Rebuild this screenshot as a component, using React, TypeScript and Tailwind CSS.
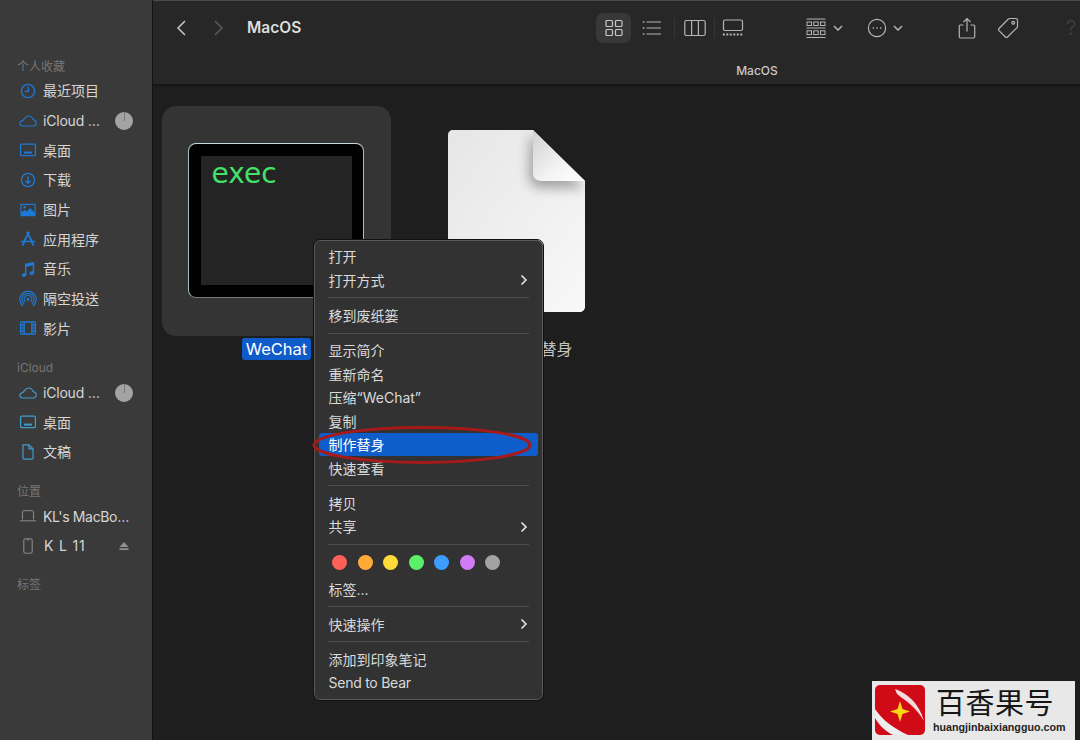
import React from 'react';

const sansStack = "font-['Inter','Noto_Sans_CJK_SC',sans-serif]";

type IconProps = { className?: string };

const ClockIcon = ({ className }: IconProps) => (
  <svg viewBox="0 0 18 18" className={className} fill="none" stroke="currentColor" strokeWidth="1.3">
    <circle cx="9" cy="9" r="6.6" />
    <path d="M9.4 4.8V9.4H5.6" />
  </svg>
);
const CloudIcon = ({ className }: IconProps) => (
  <svg viewBox="0 0 18 18" className={className} fill="none" stroke="currentColor" strokeWidth="1.2">
    <path d="M4.4 14h9.4c1.9 0 3.4-1.4 3.4-3.2 0-1.7-1.3-3-3-3.2C13.300 5.400 11.600 4 9.700 4 7.900 4 6.400 5.100 5.800 6.800 5.400 6.700 5 6.800 4.700 7.100 4.300 7.500 4.200 8 4.200 8.500 2.300 8.700 .9 9.800 .9 11.300 .9 12.800 2.400 14 4.400 14Z" />
  </svg>
);
const DesktopIcon = ({ className }: IconProps) => (
  <svg viewBox="0 0 18 18" className={className} fill="none" stroke="currentColor" strokeWidth="1.3">
    <rect x="1.600" y="3.200" width="14.800" height="11.400" rx="1.200" />
    <path d="M5 11.600H13" strokeWidth="2" />
  </svg>
);
const DownloadIcon = ({ className }: IconProps) => (
  <svg viewBox="0 0 18 18" className={className} fill="none" stroke="currentColor" strokeWidth="1.3">
    <circle cx="9" cy="9" r="6.600" />
    <path d="M9 5.200V12M6.400 9.700 9 12.300 11.600 9.700" />
  </svg>
);
const PictureIcon = ({ className }: IconProps) => (
  <svg viewBox="0 0 18 18" className={className}>
    <path fill="currentColor" fillRule="evenodd" d="M2.400 2.800h13.200c.6 0 1 .4 1 1v10.400c0 .6-.4 1-1 1H2.400c-.6 0-1-.4-1-1V3.800c0-.6.4-1 1-1ZM2.600 4v7.200l3-2.500 2.300 1.800 3.200-3.600 4.300 4.300V4H2.600Z" />
    <circle cx="5.600" cy="6.200" r="1.300" fill="currentColor" />
  </svg>
);
const AppsIcon = ({ className }: IconProps) => (
  <svg viewBox="0 0 18 18" className={className} fill="none" stroke="currentColor" strokeWidth="1.700" strokeLinecap="round">
    <path d="M9.800 2.500 5 11.500M8.200 2.500 13 11.500M2.500 11.500H15.500M3.600 15 5 12.500M14.400 15 13 12.500" />
  </svg>
);
const MusicIcon = ({ className }: IconProps) => (
  <svg viewBox="0 0 18 18" className={className}>
    <path fill="currentColor" d="M6 3.800 15.200 1.800V12.800C15.200 14.200 14 15 12.700 15 11.500 15 10.700 14.300 10.700 13.300 10.700 12.200 11.600 11.500 12.700 11.300L13.800 11.100V5.400L7.400 6.800V14.800C7.400 16.100 6.200 17 4.900 17 3.700 17 2.900 16.300 2.900 15.300 2.900 14.200 3.800 13.500 4.900 13.300L6 13.100Z" />
  </svg>
);
const AirDropIcon = ({ className }: IconProps) => (
  <svg viewBox="0 0 18 18" className={className} fill="none" stroke="currentColor" strokeWidth="1.200">
    <path d="M4.200 16A8.200 8.200 0 1 1 13.800 16" />
    <path d="M5.200 13.900A6 6 0 1 1 12.800 13.900" />
    <path d="M6.300 11.800A3.800 3.800 0 1 1 11.700 11.800" />
    <circle cx="9" cy="9.200" r="1.500" fill="currentColor" stroke="none" />
  </svg>
);
const FilmIcon = ({ className }: IconProps) => (
  <svg viewBox="0 0 18 18" className={className} fill="none" stroke="currentColor" strokeWidth="1.300">
    <rect x="1.600" y="3" width="14.800" height="12" rx="1" />
    <path d="M5.200 3V15M12.800 3V15M1.600 6H5.200M1.600 9H5.200M1.600 12H5.200M12.800 6H16.400M12.800 9H16.400M12.800 12H16.400" />
  </svg>
);
const DocIcon = ({ className }: IconProps) => (
  <svg viewBox="0 0 18 18" className={className} fill="none" stroke="currentColor" strokeWidth="1.200">
    <path d="M4 1.800H10L14 5.800V15C14 15.700 13.500 16.200 12.800 16.200H5.200C4.500 16.200 4 15.700 4 15V1.800Z" />
    <path d="M10 1.800V5.800H14" />
  </svg>
);
const LaptopIcon = ({ className }: IconProps) => (
  <svg viewBox="0 0 18 18" className={className} fill="none" stroke="currentColor" strokeWidth="1">
    <path d="M3.500 12.500V4.500C3.500 4 3.900 3.700 4.300 3.700H13.700C14.100 3.700 14.500 4 14.500 4.500V12.500" />
    <path d="M.8 13.800H17.200" />
  </svg>
);
const PhoneIcon = ({ className }: IconProps) => (
  <svg viewBox="0 0 18 18" className={className} fill="none" stroke="currentColor" strokeWidth="1.100">
    <rect x="4.800" y="1.800" width="8.400" height="14.400" rx="1.600" />
    <path d="M7.500 2.800H10.500" />
  </svg>
);

type SidebarRow = {
  label: string;
  icon: (props: IconProps) => React.ReactElement;
  pie?: boolean;
  eject?: boolean;
  textClass?: string;
};

const sidebarGroups: { title: string; color: string; marginTop: string; rows: SidebarRow[] }[] = [
  {
    title: '个人收藏',
    color: 'text-[#1c7ad6]',
    marginTop: 'mt-[55px]',
    rows: [
      { label: '最近项目', icon: ClockIcon },
      { label: 'iCloud …', icon: CloudIcon, pie: true, textClass: 'ml-[6px] tracking-[-0.2px]' },
      { label: '桌面', icon: DesktopIcon },
      { label: '下载', icon: DownloadIcon },
      { label: '图片', icon: PictureIcon },
      { label: '应用程序', icon: AppsIcon },
      { label: '音乐', icon: MusicIcon },
      { label: '隔空投送', icon: AirDropIcon },
      { label: '影片', icon: FilmIcon },
    ],
  },
  {
    title: 'iCloud',
    color: 'text-[#3f9ccb]',
    marginTop: 'mt-[13.500px]',
    rows: [
      { label: 'iCloud …', icon: CloudIcon, pie: true, textClass: 'ml-[6px] tracking-[-0.2px]' },
      { label: '桌面', icon: DesktopIcon },
      { label: '文稿', icon: DocIcon },
    ],
  },
  {
    title: '位置',
    color: 'text-[#8a8a8a]',
    marginTop: 'mt-[13.500px]',
    rows: [
      { label: "KL's MacBo…", icon: LaptopIcon, textClass: 'ml-[6px] tracking-[-0.35px]' },
      { label: 'K L 11', icon: PhoneIcon, eject: true, textClass: 'ml-[7px] tracking-[0.8px]' },
    ],
  },
  { title: '标签', color: '', marginTop: 'mt-[13px]', rows: [] },
];

const Sidebar = () => (
  <aside className="w-[152px] shrink-0 bg-[#3a3a3a] border-r border-[#121212] box-content">
    {sidebarGroups.map((group) => (
      <div key={group.title} className={group.marginTop}>
        <div className="h-[21px] pl-[17px] pt-[2px] flex items-center text-[12px] text-[#767676]">{group.title}</div>
        {group.rows.map((row, i) => {
          const Icon = row.icon;
          return (
            <div key={i} className="h-[29.7px] flex items-center pl-[19px] pr-[19px]">
              <Icon className={`w-[18px] h-[18px] shrink-0 ${group.color}`} />
              <span className={`text-[14px] text-[#d6d6d6] whitespace-nowrap ${row.textClass ?? 'ml-[6px]'}`}>{row.label}</span>
              {row.pie && (
                <span className="ml-auto w-[18px] h-[18px] rounded-full bg-[#a3a3a3] flex justify-center shrink-0">
                  <span className="w-px h-[9px] bg-[#777]" />
                </span>
              )}
              {row.eject && (
                <svg viewBox="0 0 10 10" className="ml-auto mr-[4px] w-[10px] h-[10px] text-[#8f8f8f]" fill="currentColor">
                  <path d="M5 1 9.500 6H.5Z" />
                  <rect x=".5" y="7.200" width="9" height="1.800" />
                </svg>
              )}
            </div>
          );
        })}
      </div>
    ))}
  </aside>
);

const Toolbar = () => (
  <header className="h-[86px] shrink-0 bg-[#272727] border-t border-[#4a4a4a] border-b-2 border-b-[#161616] flex flex-col">
    <div className="h-[53px] flex items-center shrink-0">
      <div className="flex-1 flex items-center pl-[21px]">
        <svg viewBox="0 0 14 20" className="w-[14px] h-[20px] text-[#c4c4c4]" fill="none" stroke="currentColor" strokeWidth="1.600">
          <path d="M11 3 4 10 11 17" />
        </svg>
        <svg viewBox="0 0 14 20" className="ml-[24px] w-[14px] h-[20px] text-[#585858]" fill="none" stroke="currentColor" strokeWidth="1.600">
          <path d="M3 3 10 10 3 17" />
        </svg>
        <span className="ml-[21px] text-[15.500px] font-semibold text-[#dedede]">MacOS</span>
      </div>
      <div className="w-[484px] shrink-0 flex items-center text-[#b4b4b4]">
        <div className="w-[35px] h-[30px] rounded-[7px] bg-[#383838] flex items-center justify-center">
          <svg viewBox="0 0 18 18" className="w-[18px] h-[18px]" fill="none" stroke="#c8c8c8" strokeWidth="1.200">
            <rect x="1" y="1.500" width="6.500" height="6" rx="1" />
            <rect x="10.500" y="1.500" width="6.500" height="6" rx="1" />
            <rect x="1" y="10.500" width="6.500" height="6" rx="1" />
            <rect x="10.500" y="10.500" width="6.500" height="6" rx="1" />
          </svg>
        </div>
        <div className="ml-[2px] w-[38px] flex justify-center">
          <svg viewBox="0 0 20 16" className="w-[20px] h-[16px]" fill="none" stroke="currentColor" strokeWidth="1.200">
            <path d="M4.500 2H19M4.500 8H19M4.500 14H19" />
            <path d="M.8 2H2.400M.8 8H2.400M.8 14H2.400" strokeWidth="1.600" />
          </svg>
        </div>
        <span className="ml-[3px] w-px h-[20px] bg-[#363636]" />
        <div className="ml-px w-[38px] flex justify-center">
          <svg viewBox="0 0 22 18" className="w-[22px] h-[18px]" fill="none" stroke="currentColor" strokeWidth="1.200">
            <rect x=".8" y="1.500" width="20.400" height="15" rx="1.500" />
            <path d="M7.600 1.500V16.500M14.400 1.500V16.500" />
          </svg>
        </div>
        <span className="w-px h-[20px] bg-[#363636]" />
        <div className="w-[36px] flex justify-center">
          <svg viewBox="0 0 22 18" className="w-[22px] h-[18px]" fill="none" stroke="currentColor" strokeWidth="1.200">
            <rect x="1.500" y="1" width="19" height="10.500" rx="1.500" />
            <path d="M.8 15.500H21.200" strokeWidth="2" strokeDasharray="2 1.500" />
          </svg>
        </div>
        <div className="ml-[53px] w-[24px] flex justify-center">
          <svg viewBox="0 0 20 20" className="w-[20px] h-[20px]" fill="none" stroke="currentColor" strokeWidth="1">
            <path d="M.5 1H19.500M.5 10H19.500M.5 19.500H19.500" />
            <rect x="1" y="4" width="4.500" height="3.500" />
            <rect x="7.700" y="4" width="4.500" height="3.500" />
            <rect x="14.500" y="4" width="4.500" height="3.500" />
            <rect x="1" y="12.800" width="4.500" height="3.800" />
            <rect x="7.700" y="12.800" width="4.500" height="3.800" />
            <rect x="14.500" y="12.800" width="4.500" height="3.800" />
          </svg>
        </div>
        <svg viewBox="0 0 10 6" className="ml-[5px] w-[10px] h-[6px]" fill="none" stroke="currentColor" strokeWidth="1.500">
          <path d="M1 1 5 5 9 1" />
        </svg>
        <div className="ml-[24px] w-[20px] flex justify-center">
          <svg viewBox="0 0 20 20" className="w-[20px] h-[20px]" fill="none" stroke="currentColor" strokeWidth="1.200">
            <circle cx="10" cy="10" r="8.600" />
            <path d="M5.700 10H7M9.400 10H10.700M13 10H14.300" strokeWidth="1.600" />
          </svg>
        </div>
        <svg viewBox="0 0 10 6" className="ml-[6px] w-[10px] h-[6px]" fill="none" stroke="currentColor" strokeWidth="1.500">
          <path d="M1 1 5 5 9 1" />
        </svg>
        <div className="ml-[54px] w-[20px] flex justify-center">
          <svg viewBox="0 0 18 22" className="w-[18px] h-[22px]" fill="none" stroke="currentColor" strokeWidth="1.200">
            <path d="M5.500 8H2.500C1.800 8 1.300 8.500 1.300 9.200V19.800C1.300 20.500 1.800 21 2.500 21H15.500C16.200 21 16.700 20.500 16.700 19.800V9.200C16.700 8.500 16.200 8 15.500 8H12.500" />
            <path d="M9 14.500V1.500M5.500 5 9 1.500 12.500 5" />
          </svg>
        </div>
        <div className="ml-[19px] w-[24px] flex justify-center">
          <svg viewBox="0 0 22 22" className="w-[22px] h-[22px]" fill="none" stroke="currentColor" strokeWidth="1.200">
            <path d="M12.500 1.500H19C20 1.500 20.500 2 20.500 3V9.500C20.500 10 20.300 10.400 20 10.700L10.500 20C9.900 20.600 9 20.600 8.400 20L2 13.600C1.400 13 1.400 12.100 2 11.500L11.300 2C11.600 1.700 12 1.500 12.500 1.500Z" />
            <circle cx="16.200" cy="5.800" r="1.400" />
          </svg>
        </div>
        <span className="ml-[46px] text-[20px] text-[#3c3c3c] leading-none">?</span>
      </div>
    </div>
    <div className="pl-[281px] text-center text-[12px] font-medium text-[#c8c8c8] leading-[33px]">MacOS</div>
  </header>
);

const ExecTile = () => (
  <div className="w-[229px] shrink-0 flex flex-col items-center">
    <div className="w-[229px] h-[230px] rounded-[14px] bg-[#343434] pl-[26px] pt-[37px]">
      <div className="w-[176px] h-[155px] rounded-[8px] bg-black border-[1.500px] border-t-[#c5dbe0] border-x-[#a8bdc2] border-b-[#777] pt-[11.500px] pl-[11.500px]">
        <div className="w-[151px] h-[129px] bg-[#242424] pl-[11px] pt-[1px] font-['DejaVu_Sans',sans-serif] text-[28px] leading-[34px] text-[#45e06a]">
          exec
        </div>
      </div>
    </div>
    <span className="mt-[2px] h-[22px] px-[4px] rounded-[3px] bg-[#0f5bc9] text-[16.500px] leading-[22px] text-white">WeChat</span>
  </div>
);

const AliasTile = () => (
  <div className="ml-[11px] w-[229px] shrink-0 flex flex-col items-center">
    <div className="w-[229px] h-[230px] flex justify-center pt-[24px]">
      <svg viewBox="0 0 137 182" className="w-[137px] h-[182px]">
        <defs>
          <linearGradient id="page" x1="0" y1="0" x2="1" y2="1">
            <stop offset="0" stopColor="#e6e6e6" />
            <stop offset="1" stopColor="#f8f8f8" />
          </linearGradient>
          <linearGradient id="fold" x1="0" y1="0" x2="1" y2="1">
            <stop offset="0" stopColor="#d0d0d0" />
            <stop offset=".6" stopColor="#f4f4f4" />
            <stop offset="1" stopColor="#ffffff" />
          </linearGradient>
          <filter id="foldShadow" x="-40%" y="-40%" width="180%" height="180%">
            <feGaussianBlur stdDeviation="6" />
          </filter>
          <clipPath id="pageClip">
            <path d="M5 0H85L137 51V177C137 180 134 182 132 182H5C2 182 0 180 0 177V5C0 2 2 0 5 0Z" />
          </clipPath>
        </defs>
        <path fill="url(#page)" d="M5 0H85L137 51V177C137 180 134 182 132 182H5C2 182 0 180 0 177V5C0 2 2 0 5 0Z" />
        <g clipPath="url(#pageClip)">
          <path fill="#6e6e6e" opacity=".6" filter="url(#foldShadow)" d="M82 4 137 58H95C86 58 81 54 81 46Z" />
        </g>
        <path fill="url(#fold)" d="M85 0 137 51H94C88 51 85 48 85 43Z" />
      </svg>
    </div>
    <span className="mt-[2px] h-[22px] text-[16px] leading-[22px] text-[#c4c4c4] whitespace-nowrap">WeChat 的替身</span>
  </div>
);

const Separator = () => (
  <div className="h-[11.700px] flex items-center px-[13px]">
    <div className="h-px w-full bg-[#4e4e4e]" />
  </div>
);

const MenuItem = ({ label, arrow, active, tight }: { label: string; arrow?: boolean; active?: boolean; tight?: boolean }) => (
  <div
    className={`h-[23.500px] mx-[4px] pl-[9.500px] pr-[10px] flex items-center justify-between rounded-[3px] text-[14px] whitespace-nowrap ${
      active ? 'bg-[#0f5ccb] text-white' : 'text-[#dadada]'
    } ${tight ? 'tracking-[-0.25px]' : ''}`}
  >
    <span>{label}</span>
    {arrow && (
      <svg viewBox="0 0 8 12" className="w-[8px] h-[12px] text-[#e6e6e6]" fill="none" stroke="currentColor" strokeWidth="1.600">
        <path d="M1.500 1.500 6 6 1.500 10.500" />
      </svg>
    )}
  </div>
);

const tagColors = [
  { name: 'red', cls: 'bg-[#ff6159]' },
  { name: 'orange', cls: 'bg-[#ffab3a]' },
  { name: 'yellow', cls: 'bg-[#ffdb3a]' },
  { name: 'green', cls: 'bg-[#5cf06a]' },
  { name: 'blue', cls: 'bg-[#3c9dff]' },
  { name: 'purple', cls: 'bg-[#cf7cf5]' },
  { name: 'gray', cls: 'bg-[#a3a3a6]' },
];

const ContextMenu = () => (
  <div className="absolute left-[314px] top-[240px] w-[229px] h-[460px] rounded-[6px] bg-[#323232] border border-[#5a5a5a] outline outline-[#111] pt-[4px]">
    <MenuItem label="打开" />
    <MenuItem label="打开方式" arrow />
    <Separator />
    <MenuItem label="移到废纸篓" />
    <Separator />
    <MenuItem label="显示简介" />
    <MenuItem label="重新命名" />
    <MenuItem label="压缩“WeChat”" />
    <MenuItem label="复制" />
    <MenuItem label="制作替身" active />
    <MenuItem label="快速查看" />
    <Separator />
    <MenuItem label="拷贝" />
    <MenuItem label="共享" arrow />
    <Separator />
    <div className="h-[27px] pl-[17px] pb-[3px] flex items-center gap-[10.500px]">
      {tagColors.map((c) => (
        <span key={c.name} className={`w-[15px] h-[15px] rounded-full ${c.cls}`} />
      ))}
    </div>
    <MenuItem label="标签..." />
    <Separator />
    <MenuItem label="快速操作" arrow />
    <Separator />
    <MenuItem label="添加到印象笔记" />
    <MenuItem label="Send to Bear" tight />
  </div>
);

const Watermark = () => (
  <div className="absolute left-[872px] top-[681px] w-[203px] h-[59px] bg-[#e8e8e8] flex pl-[3px] pt-[4px]">
    <svg viewBox="0 0 50 50" className="w-[50px] h-[50px] shrink-0">
      <rect width="50" height="50" rx="5" fill="#d10a17" />
      <path d="M0 24C8 36 20 44 33 50H18C10 46 4 40 0 33Z" fill="#eeeeee" />
      <path d="M20 4C32 8 44 18 49 36 42 24 34 18 26 12L32 17 22 9Z" fill="#f3dcdc" />
      <path d="M25 16 27.500 24 35 26.500 27.500 29 25 37 22.500 29 15 26.500 22.500 24Z" fill="#f7d614" />
    </svg>
    <div className="ml-[8px] flex flex-col items-start">
      <span className="ml-[3px] h-[32px] text-[29px] leading-[32px] tracking-[0.5px] text-[#161616] font-['Noto_Sans_CJK_SC',sans-serif] whitespace-nowrap">
        百香果号
      </span>
      <span className="mt-[3px] text-[10.700px] leading-[14px] font-bold text-[#222] font-['Liberation_Sans',sans-serif] whitespace-nowrap">
        huangjinbaixiangguo.com
      </span>
    </div>
  </div>
);

export default function App() {
  return (
    <div className={`relative w-[1080px] h-[740px] overflow-hidden flex bg-[#1e1e1e] ${sansStack}`}>
      <Sidebar />
      <div className="flex-1 min-w-0 flex flex-col">
        <Toolbar />
        <main className="flex-1 flex items-start pl-[9px] pt-[20px] bg-[#1e1e1e]">
          <ExecTile />
          <AliasTile />
        </main>
      </div>
      <ContextMenu />
      <svg viewBox="0 0 222 40" className="absolute left-[311px] top-[425px] w-[222px] h-[40px]" fill="none">
        <ellipse cx="111" cy="20" rx="108" ry="17.500" stroke="#a81a1a" strokeWidth="3" />
      </svg>
      <Watermark />
    </div>
  );
}
